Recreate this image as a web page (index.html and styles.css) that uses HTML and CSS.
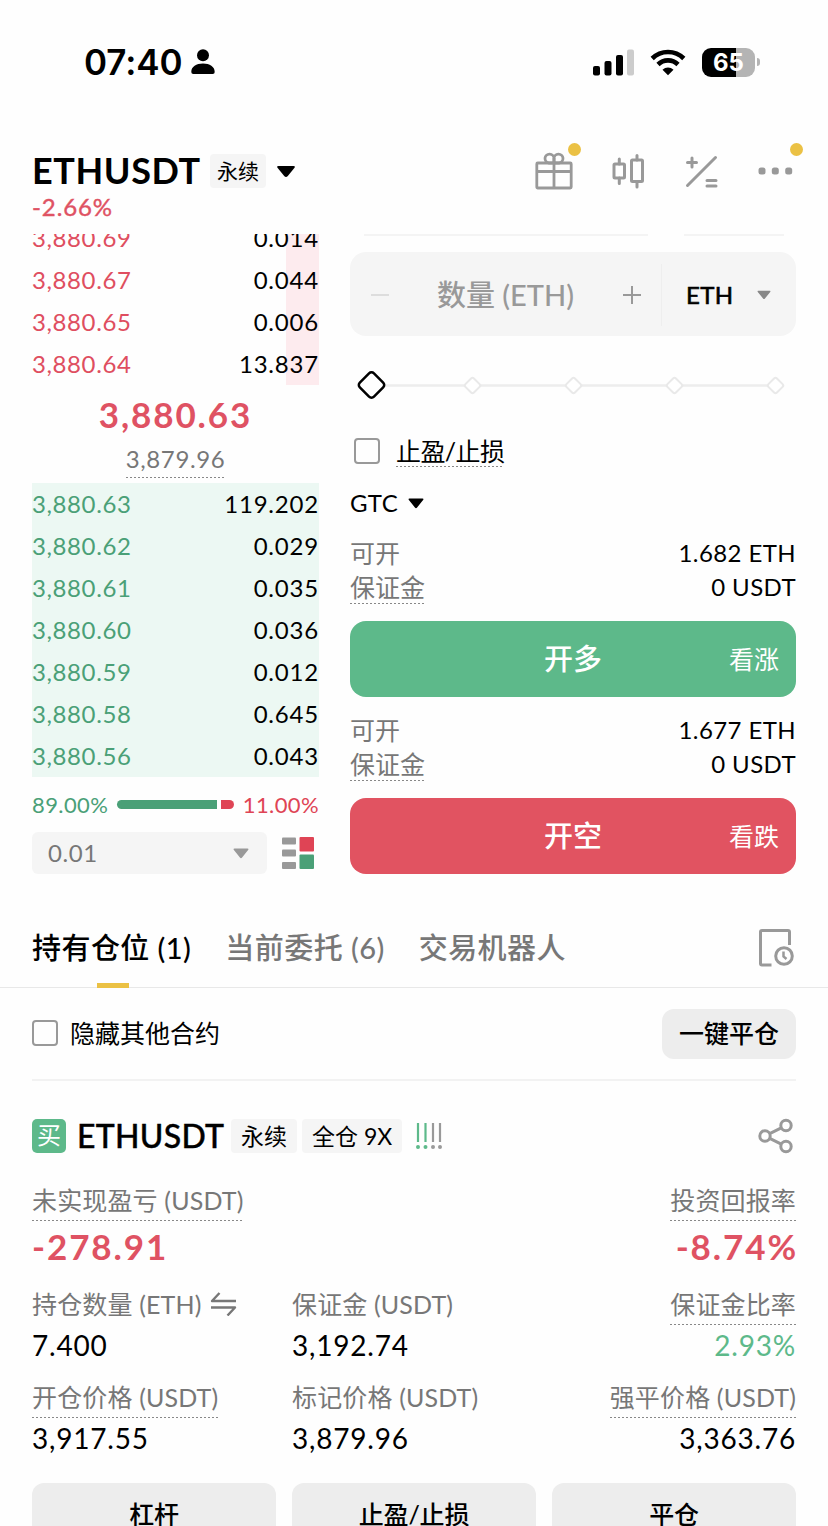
FILE: index.html
```html
<!DOCTYPE html>
<html lang="zh-CN">

<head>
    <meta charset="UTF-8">
    <meta name="viewport" content="width=device-width, initial-scale=1.0">
    <link rel="stylesheet" href="styles.css">
    <title>ETHUSDT 永续</title>
</head>

<body>
    <div class="status-bar">
        <span class="time">07:40</span>
        <svg class="person" width="24" height="26" viewBox="0 0 24 26">
            <circle cx="12" cy="6.2" r="6" />
            <path d="M0.3 23c0-5.500 5-8.500 11.700-8.500s11.700 3 11.700 8.500q0 2-2 2h-19.400q-2 0-2-2z" />
        </svg>
        <div class="status-icons">
            <svg width="42" height="28" viewBox="0 0 42 28">
                <rect x="0" y="18" width="7" height="9.500" rx="2" />
                <rect x="11.500" y="13" width="7" height="14.500" rx="2" />
                <rect x="23" y="7" width="7" height="20.500" rx="2" />
                <rect x="34" y="1.500" width="7" height="26" rx="2" fill="#ccc" />
            </svg>
            <svg class="wifi" width="36" height="28" viewBox="0 0 36 28" fill="none" stroke="#000" stroke-width="4.600">
                <path d="M2.200 10.500a22.500 22.500 0 0 1 31.600 0" />
                <path d="M8 16.500a14.300 14.300 0 0 1 20 0" />
                <path d="M12.500 21.800a8 8 0 0 1 11 0l-5.500 5.500z" fill="#000" stroke="none" />
            </svg>
            <div class="battery">65</div>
            <div class="battery-tip"></div>
        </div>
    </div>

    <header>
        <div class="pair">
            <div class="pair-row">
                <h1>ETHUSDT</h1>
                <span class="tag-head">永续</span>
                <svg width="20" height="13" viewBox="0 0 20 13"><path d="M2.500 1h15q2.300 0 .8 2l-6.500 8q-1.800 2-3.600 0l-6.500-8q-1.500-2 .8-2z" /></svg>
            </div>
            <div class="change">-2.66%</div>
        </div>
        <div class="tools">
            <span class="tool has-dot">
                <svg width="38" height="38" viewBox="0 0 38 38" fill="none" stroke="#999" stroke-width="2.800">
                    <rect x="1.800" y="11" width="34.400" height="25" rx="1" />
                    <path d="M1.800 19.500h34.400M19 6v30" />
                    <path d="M19 11h-5a4.500 4.500 0 1 1 5-4.500v4.500zM19 11h5a4.500 4.500 0 1 0-5-4.500z" />
                </svg>
            </span>
            <span class="tool">
                <svg width="34" height="36" viewBox="0 0 34 36" fill="none" stroke="#999" stroke-width="3" stroke-linecap="round">
                    <rect x="2" y="11" width="10.500" height="14" rx="1" />
                    <rect x="19.500" y="7" width="11" height="21.500" rx="1" />
                    <path d="M7.300 6v5M7.300 25v5.500M25 2.500v4.500M25 28.500v5.500" />
                </svg>
            </span>
            <span class="tool">
                <svg width="34" height="34" viewBox="0 0 34 34" fill="none" stroke="#999" stroke-width="3" stroke-linecap="round">
                    <path d="M2.500 31.500l28-28M2.500 8.500h9M7 4v9M22 26.500h9M22 32h9" />
                </svg>
            </span>
            <span class="tool has-dot wide">
                <svg width="36" height="8" viewBox="0 0 36 8" fill="#999">
                    <rect x="0.500" y="0.500" width="7" height="7" rx="2.500" />
                    <rect x="13.800" y="0.500" width="7" height="7" rx="2.500" />
                    <rect x="27.200" y="0.500" width="7" height="7" rx="2.500" />
                </svg>
            </span>
        </div>
    </header>

    <main class="trade">
        <section class="book">
            <div class="asks">
                <div class="row"><span>3,880.69</span><b>0.014</b></div>
                <div class="row"><span>3,880.67</span><b>0.044</b></div>
                <div class="row"><span>3,880.65</span><b>0.006</b></div>
                <div class="row"><span>3,880.64</span><b>13.837</b></div>
            </div>
            <div class="last">
                <div class="last-price">3,880.63</div>
                <div class="mark-price dotted">3,879.96</div>
            </div>
            <div class="bids">
                <div class="row"><span>3,880.63</span><b>119.202</b></div>
                <div class="row"><span>3,880.62</span><b>0.029</b></div>
                <div class="row"><span>3,880.61</span><b>0.035</b></div>
                <div class="row"><span>3,880.60</span><b>0.036</b></div>
                <div class="row"><span>3,880.59</span><b>0.012</b></div>
                <div class="row"><span>3,880.58</span><b>0.645</b></div>
                <div class="row"><span>3,880.56</span><b>0.043</b></div>
            </div>
            <div class="ratio">
                <span class="up">89.00%</span>
                <i class="bar-up"></i>
                <i class="bar-down"></i>
                <span class="down">11.00%</span>
            </div>
            <div class="depth">
                <div class="select">0.01<svg width="16" height="11" viewBox="0 0 16 11" fill="#999"><path d="M1.500 .5h13q1.600 0 .6 1.500l-6 7.500q-1.100 1.300-2.200 0l-6-7.500q-1-1.500.6-1.500z" /></svg></div>
                <svg width="32" height="32" viewBox="0 0 32 32">
                    <g fill="#999">
                        <rect y="0.500" width="14" height="7" rx="1" />
                        <rect y="12.500" width="14" height="7" rx="1" />
                        <rect y="25" width="14" height="7" rx="1" />
                    </g>
                    <rect x="17.500" y="0" width="14.500" height="14.500" rx="1" fill="#df4455" />
                    <rect x="17.500" y="17.500" width="14.500" height="14.500" rx="1" fill="#4aa077" />
                </svg>
            </div>
        </section>

        <section class="order">
            <div class="prev-fields"><i class="prev-price"></i><i class="prev-type"></i></div>
            <div class="amount">
                <i class="minus"></i>
                <span class="placeholder">数量 (ETH)</span>
                <svg width="20" height="20" viewBox="0 0 20 20" stroke="#999" stroke-width="2"><path d="M1 10h18M10 1v18" /></svg>
                <div class="unit">ETH<svg width="14" height="10" viewBox="0 0 16 11" fill="#888"><path d="M1.500 .5h13q1.600 0 .6 1.500l-6 7.500q-1.100 1.300-2.200 0l-6-7.500q-1-1.500.6-1.500z" /></svg></div>
            </div>
            <svg class="slider" width="446" height="34" viewBox="0 0 446 34" fill="#fff">
                <path d="M22 17.500h404" stroke="#ededed" stroke-width="2.500" />
                <g stroke="#e9e9e9" stroke-width="2">
                    <rect x="-6" y="-6" width="12" height="12" rx="2" transform="translate(122.500 17.500) rotate(45)" />
                    <rect x="-6" y="-6" width="12" height="12" rx="2" transform="translate(223.500 17.500) rotate(45)" />
                    <rect x="-6" y="-6" width="12" height="12" rx="2" transform="translate(324.500 17.500) rotate(45)" />
                    <rect x="-6" y="-6" width="12" height="12" rx="2" transform="translate(425.500 17.500) rotate(45)" />
                </g>
                <rect x="-10" y="-10" width="20" height="20" rx="3.500" stroke="#000" stroke-width="2.500" transform="translate(21.500 17) rotate(45)" />
            </svg>
            <div class="tpsl"><i class="checkbox"></i><span class="dotted">止盈/止损</span></div>
            <div class="tif">GTC<svg width="16" height="11" viewBox="0 0 16 11"><path d="M1.500 .5h13q1.600 0 .6 1.500l-6 7.500q-1.100 1.300-2.200 0l-6-7.500q-1-1.500.6-1.500z" /></svg></div>
            <div class="info"><span>可开</span><b>1.682 ETH</b></div>
            <div class="info"><span class="dotted">保证金</span><b>0 USDT</b></div>
            <div class="btn long"><span></span><strong>开多</strong><span>看涨</span></div>
            <div class="info"><span>可开</span><b>1.677 ETH</b></div>
            <div class="info"><span class="dotted">保证金</span><b>0 USDT</b></div>
            <div class="btn short"><span></span><strong>开空</strong><span>看跌</span></div>
        </section>
    </main>

    <nav class="tabs">
        <span class="tab active">持有仓位 (1)</span>
        <span class="tab">当前委托 (6)</span>
        <span class="tab">交易机器人</span>
        <svg width="38" height="40" viewBox="0 0 38 40" fill="none" stroke="#999" stroke-width="3">
            <path d="M14.500 38h-9.500q-1.500 0-1.500-1.500v-31.500q0-1.500 1.500-1.500h26q1.500 0 1.500 1.500v13" />
            <circle cx="27" cy="29" r="8.300" />
            <path d="M26.500 24.500v5l3 2.500" stroke-width="2.500" />
        </svg>
    </nav>

    <section class="filter">
        <i class="checkbox"></i>
        <span>隐藏其他合约</span>
        <div class="close-all">一键平仓</div>
    </section>

    <section class="position">
        <div class="pos-head">
            <span class="side">买</span>
            <h2>ETHUSDT</h2>
            <span class="tag">永续</span>
            <span class="tag">全仓 9X</span>
            <svg width="27" height="26" viewBox="0 0 27 26" stroke-width="2.200">
                <g stroke="#5db98a" fill="#5db98a">
                    <path d="M2 0v19M9.500 0v19" />
                    <circle cx="2" cy="24" r="0.900" /><circle cx="9.500" cy="24" r="0.900" />
                </g>
                <g stroke="#999" fill="#999">
                    <path d="M17 0v19M24 0v19" />
                    <circle cx="17" cy="24" r="0.900" /><circle cx="24" cy="24" r="0.900" />
                </g>
            </svg>
            <svg class="share" width="36" height="36" viewBox="0 0 36 36" fill="none" stroke="#999" stroke-width="3">
                <circle cx="7" cy="18" r="5.200" />
                <circle cx="28" cy="7.500" r="5.200" />
                <circle cx="28" cy="28.500" r="5.200" />
                <path d="M11.700 15.700l11.600-5.800M11.700 20.300l11.600 5.800" />
            </svg>
        </div>
        <div class="pnl">
            <div>
                <span class="label dotted">未实现盈亏 (USDT)</span>
                <div class="big">-278.91</div>
            </div>
            <div class="right">
                <span class="label dotted">投资回报率</span>
                <div class="big">-8.74%</div>
            </div>
        </div>
        <div class="stats">
            <div>
                <span class="label">持仓数量 (ETH)<svg width="27" height="24" viewBox="0 0 27 24" fill="none" stroke="#777" stroke-width="2.400" stroke-linejoin="round"><path d="M26 9h-24l7.500-8M1 15.500h24l-7.500 8" /></svg></span>
                <div class="value">7.400</div>
            </div>
            <div>
                <span class="label">保证金 (USDT)</span>
                <div class="value">3,192.74</div>
            </div>
            <div class="right">
                <span class="label dotted">保证金比率</span>
                <div class="value green">2.93%</div>
            </div>
            <div>
                <span class="label dotted">开仓价格 (USDT)</span>
                <div class="value">3,917.55</div>
            </div>
            <div>
                <span class="label">标记价格 (USDT)</span>
                <div class="value">3,879.96</div>
            </div>
            <div class="right">
                <span class="label dotted">强平价格 (USDT)</span>
                <div class="value">3,363.76</div>
            </div>
        </div>
        <div class="actions">
            <div>杠杆</div>
            <div>止盈/止损</div>
            <div>平仓</div>
        </div>
    </section>
</body>

</html>
```
FILE: styles.css
```css
* {
    box-sizing: border-box;
}

body {
    margin: 0;
    width: 828px;
    height: 1526px;
    overflow: hidden;
    background: #fefefe;
    color: #000;
    font-family: Lato, "Noto Sans CJK SC", sans-serif;
    font-size: 24px;
    line-height: 34px;
    white-space: nowrap;
}

h1, h2, b {
    margin: 0;
    font-weight: normal;
}

svg {
    display: block;
    flex: none;
}

i {
    display: block;
    flex: none;
}

.dotted {
    background: repeating-linear-gradient(90deg, #888 0 2px, transparent 2px 4px) left bottom / 100% 1px no-repeat;
}

/* status bar */
.status-bar {
    display: flex;
    align-items: center;
    height: 124px;
    padding: 0 73px 0 84px;
}

.time {
    width: 107px;
    font-family: Inter, sans-serif;
    font-weight: 600;
    font-size: 35px;
    letter-spacing: -0.1px;
}

.status-icons {
    display: flex;
    align-items: center;
    margin-left: auto;
}

.wifi {
    margin: 0 16px 0 15px;
}

.battery {
    width: 53px;
    height: 29px;
    border-radius: 9px;
    background: linear-gradient(90deg, #000 65%, #b4b4b4 65%);
    color: #fff;
    font: 700 24px/29px Inter, sans-serif;
    text-align: center;
}

.battery-tip {
    width: 3px;
    height: 8px;
    margin-left: 2px;
    margin-right: -5px;
    border-radius: 0 3px 3px 0;
    background: #b4b4b4;
}

/* header */
header {
    display: flex;
    justify-content: space-between;
    height: 110px;
    padding: 27px 34px 0 32px;
}

.pair-row {
    display: flex;
    align-items: center;
    height: 40px;
}

h1 {
    width: 178px;
    font-size: 36px;
    font-weight: 700;
    line-height: 32px;
    letter-spacing: 0.6px;
    padding-bottom: 2px;
}

.tag-head {
    margin-right: 10px;
    padding: 0 7px;
    border-radius: 4px;
    background: #f5f5f5;
    font-size: 21px;
}

.change {
    margin-top: -1px;
    color: #df5263;
    letter-spacing: 0.9px;
    -webkit-text-stroke: 0.4px #df5263;
}

.tools {
    display: flex;
    gap: 39px;
    height: 40px;
    align-items: center;
}

.tool {
    position: relative;
}

.has-dot::after {
    content: "";
    position: absolute;
    top: -9px;
    right: -8px;
    width: 13px;
    height: 13px;
    border-radius: 50%;
    background: #ebc144;
}

.wide::after {
    top: -24px;
    right: -9px;
}

/* order book and order form */
.trade {
    display: flex;
    gap: 31px;
    height: 673px;
    padding: 0 32px;
    overflow: hidden;
}

.book {
    width: 287px;
    margin-top: -17px;
}

.row {
    display: flex;
    justify-content: space-between;
    height: 42px;
    line-height: 42px;
    letter-spacing: 0.6px;
}

.asks {
    color: #df4e60;
    background: linear-gradient(#fdebee, #fdebee) right / 33px 100% no-repeat;
}

.bids {
    color: #4aa077;
    background: #ecf8f3;
}

.bids .row {
    line-height: 41px;
}

.row b {
    color: #000;
    letter-spacing: 0.8px;
}

.last {
    display: flex;
    flex-direction: column;
    align-items: center;
    height: 98px;
    padding-top: 10px;
}

.last-price {
    height: 47px;
    color: #df5263;
    font-size: 35px;
    font-weight: 700;
    line-height: 39px;
    letter-spacing: 1.9px;
}

.mark-price {
    height: 36px;
    color: #777;
    letter-spacing: 0.6px;
}

.ratio {
    display: flex;
    align-items: center;
    height: 55px;
    font-size: 22px;
    letter-spacing: 0.4px;
}

.up {
    width: 85px;
    color: #4aa077;
}

.down {
    margin-left: auto;
    color: #df4455;
}

.bar-up {
    width: 100px;
    height: 9px;
    margin-right: 4px;
    border-radius: 5px 0 0 5px;
    background: #4aa077;
}

.bar-down {
    width: 13px;
    height: 9px;
    border-radius: 0 5px 5px 0;
    background: #df4455;
}

.depth {
    display: flex;
    align-items: center;
    gap: 15px;
}

.select {
    display: flex;
    align-items: center;
    justify-content: space-between;
    width: 235px;
    height: 42px;
    padding: 0 18px 0 16px;
    border-radius: 6px;
    background: #f5f5f5;
    color: #777;
    letter-spacing: 0.6px;
}

.order {
    width: 446px;
}

.prev-fields {
    display: flex;
    gap: 36px;
    height: 18px;
    padding-left: 14px;
}

.prev-price,
.prev-type {
    width: 284px;
    height: 2px;
    background: #f4f4f4;
}

.prev-type {
    width: 100px;
}

.amount {
    display: flex;
    align-items: center;
    height: 84px;
    padding: 1px 0 0 21px;
    border-radius: 16px;
    background: #f5f5f5;
}

.minus {
    width: 18px;
    height: 2px;
    background: #ddd;
}

.placeholder {
    width: 233px;
    padding-top: 1px;
    text-align: center;
    color: #999;
    font-size: 29px;
    font-weight: 500;
}

.unit {
    display: flex;
    align-items: center;
    justify-content: space-between;
    width: 135px;
    height: 62px;
    margin-left: 19px;
    padding: 0 25px 0 24px;
    border-left: 1px solid #eee;
    letter-spacing: 0.3px;
    -webkit-text-stroke: 0.6px #000;
}

.slider {
    margin-top: 32px;
}

.checkbox {
    width: 26px;
    height: 26px;
    border: 2px solid #999;
    border-radius: 4px;
}

.tpsl {
    display: flex;
    align-items: center;
    gap: 16px;
    height: 36px;
    margin-top: 31px;
    padding-left: 4px;
    font-size: 25px;
    letter-spacing: -0.6px;
}

.tpsl .dotted {
    height: 32px;
    line-height: 32px;
}

.tif {
    display: flex;
    align-items: center;
    gap: 10px;
    margin: 17px 0 16px;
    letter-spacing: 0.4px;
}

.info {
    display: flex;
    justify-content: space-between;
    color: #777;
    font-size: 25px;
}

.info b {
    color: #000;
    font-size: 24px;
    letter-spacing: 0.4px;
}

.btn {
    display: grid;
    grid-template-columns: 1fr 60px 1fr;
    align-items: center;
    height: 76px;
    margin: 17px 0 16px;
    padding: 0 17px;
    border-radius: 16px;
    color: #fff;
    font-size: 25px;
    text-align: right;
}

.btn strong {
    font-size: 29px;
    font-weight: 500;
    text-align: center;
}

.long {
    background: #5db98a;
}

.short {
    background: #e15361;
}

/* tabs */
.tabs {
    display: flex;
    align-items: center;
    gap: 34px;
    height: 81px;
    padding: 0 33px 0 32px;
    border-bottom: 1px solid #e8e8e8;
    color: #777;
    font-size: 29px;
    font-weight: 500;
    letter-spacing: 0.45px;
}

.tabs svg {
    margin-left: auto;
}

.tab {
    position: relative;
    line-height: 81px;
}

.active {
    color: #000;
}

.active::after {
    content: "";
    position: absolute;
    left: 65px;
    bottom: 0;
    width: 32px;
    height: 5px;
    background: #ebc144;
}

.filter {
    display: flex;
    align-items: center;
    gap: 12px;
    height: 93px;
    margin: 0 32px;
    border-bottom: 2px solid #f2f2f2;
    font-size: 25px;
}

.filter > span,
.filter .checkbox {
    margin-bottom: 2px;
}

.close-all {
    width: 134px;
    height: 50px;
    margin-left: auto;
    border-radius: 12px;
    background: #ededed;
    font-weight: 500;
    line-height: 48px;
    text-align: center;
}

/* position card */
.position {
    padding: 38px 32px 0;
}

.pos-head {
    display: flex;
    align-items: center;
    height: 34px;
}

.side {
    width: 34px;
    height: 34px;
    margin-right: 11px;
    border-radius: 5px;
    background: #5db98a;
    color: #fff;
    font-size: 24px;
    line-height: 32px;
    text-align: center;
}

h2 {
    width: 154px;
    font-size: 32px;
    font-weight: 500;
    letter-spacing: 0.3px;
    -webkit-text-stroke: 0.4px #000;
}

.tag {
    margin-right: 5px;
    padding: 0 10px;
    border-radius: 4px;
    background: #f5f5f5;
    font-size: 23px;
}

.tag + svg {
    margin-left: 9px;
}

.pos-head .share {
    margin-left: auto;
    margin-right: 2px;
}

.label {
    display: inline-flex;
    align-items: center;
    gap: 8px;
    height: 39px;
    padding-bottom: 3px;
    color: #777;
    font-size: 25px;
    letter-spacing: 0.15px;
    vertical-align: top;
}

.right {
    text-align: right;
}

.pnl {
    display: flex;
    justify-content: space-between;
    height: 104px;
    margin-top: 29px;
}

.big {
    padding-top: 3px;
    color: #df5263;
    font-size: 35px;
    font-weight: 700;
    line-height: 44px;
    letter-spacing: 1.9px;
}

.right .big {
    margin-right: -2px;
}

.stats {
    display: grid;
    grid-template-columns: 260px 260px 1fr;
    grid-auto-rows: 93px;
}

.value {
    padding-top: 1px;
    font-size: 28px;
    line-height: 38px;
    letter-spacing: 0.8px;
}

.green {
    color: #5db98a;
}

.actions {
    display: grid;
    grid-template-columns: repeat(3, 1fr);
    gap: 16px;
    margin-top: 11px;
}

.actions div {
    height: 64px;
    border-radius: 12px;
    background: #ededed;
    font-size: 25px;
    font-weight: 500;
    letter-spacing: -0.2px;
    line-height: 63px;
    text-align: center;
}
```
